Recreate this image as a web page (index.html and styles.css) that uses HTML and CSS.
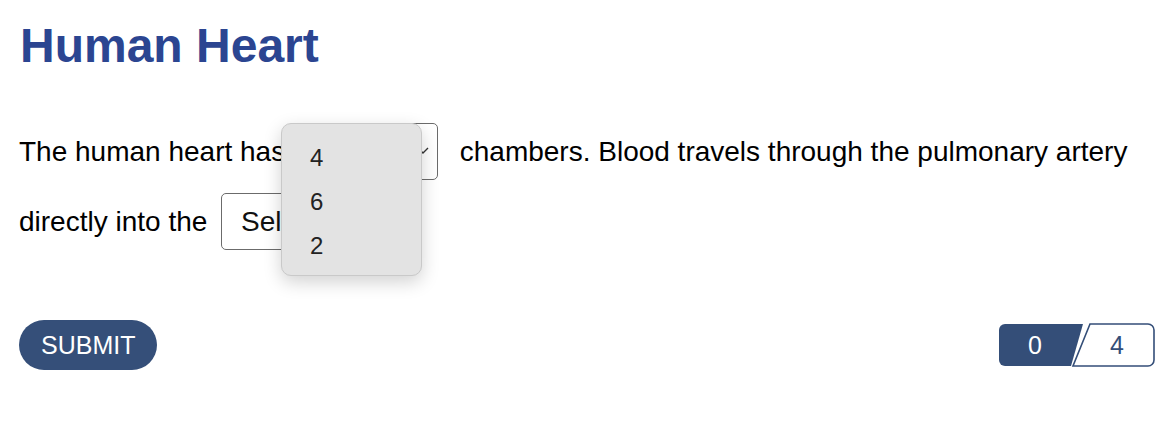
FILE: index.html
```html
<!DOCTYPE html>
<html lang="en">
<head>
  <meta charset="UTF-8">
  <meta name="viewport" content="width=device-width, initial-scale=1.0">
  <title>Human Heart</title>
  <link rel="stylesheet" href="styles.css">
</head>
<body>
  <main class="page">
    <h1 class="title">Human Heart</h1>

    <div class="question">
      The human heart has
      <span class="pick">
        <select class="blank" name="chambers">
          <option>Select</option>
          <option>4</option>
          <option>6</option>
          <option>2</option>
        </select>
        <svg class="chevron" width="12" height="7" viewBox="0 0 12 7"><path d="M1 1l5 5 5-5" fill="none" stroke="#333" stroke-width="1.4"/></svg>
        <span class="menu">
          <span class="menu-item">4</span>
          <span class="menu-item">6</span>
          <span class="menu-item">2</span>
        </span>
      </span>
      chambers. Blood travels through the pulmonary artery
      directly into the
      <span class="pick">
        <select class="blank" name="target">
          <option>Select</option>
          <option>lungs</option>
          <option>left atrium</option>
          <option>aorta</option>
        </select>
        <svg class="chevron" width="12" height="7" viewBox="0 0 12 7"><path d="M1 1l5 5 5-5" fill="none" stroke="#333" stroke-width="1.4"/></svg>
      </span>
      .
    </div>

    <div class="actions">
      <button class="submit">SUBMIT</button>

      <svg class="score" width="157" height="44" viewBox="0 0 157 44">
        <path d="M7 1H85L73 43H7A6 6 0 0 1 1 37V7A6 6 0 0 1 7 1Z" fill="#344e78"/>
        <path d="M92 1H150A6 6 0 0 1 156 7V37A6 6 0 0 1 150 43H75Z" fill="#fff" stroke="#344e78" stroke-width="1.6"/>
        <text x="37" y="31" fill="#fff" text-anchor="middle" class="score-num">0</text>
        <text x="119" y="31" fill="#344e78" text-anchor="middle" class="score-num">4</text>
      </svg>
    </div>
  </main>
</body>
</html>
```

FILE: styles.css
```css
body {
  margin: 0;
  background: #fff;
  font-family: "Liberation Sans", Arial, sans-serif;
  color: #000;
}

.page {
  padding: 18px 13px 0 19px;
}

.title {
  margin: 0;
  font-size: 48px;
  line-height: 56px;
  font-weight: bold;
  color: #2b4591;
  padding-left: 1px;
}

.question {
  margin: 43px 0 0;
  font-size: 28px;
  line-height: 70px;
}

.pick {
  position: relative;
  display: inline-block;
  margin: 0 14px 0 6px;
}

.blank {
  appearance: none;
  -webkit-appearance: none;
  width: 139px;
  height: 57px;
  padding: 0 40px 0 19px;
  border: 1px solid #6b6b6b;
  border-radius: 5px;
  background: #fff;
  font-family: "Liberation Sans", Arial, sans-serif;
  font-size: 28px;
  color: #111;
}

.chevron {
  position: absolute;
  right: 9px;
  top: 30px;
}

.menu {
  position: absolute;
  left: -18px;
  top: 6px;
  width: 141px;
  height: 153px;
  padding: 12px 0 9px;
  background: #e3e3e3;
  border: 1px solid #c9c9c9;
  border-radius: 10px;
  box-shadow: 0 6px 18px rgba(0, 0, 0, 0.18);
  box-sizing: border-box;
  z-index: 2;
}

.menu-item {
  display: block;
  padding-left: 28px;
  font-size: 24px;
  line-height: 44px;
  color: #222;
}

.actions {
  display: flex;
  justify-content: space-between;
  align-items: center;
  margin-top: 63px;
}

.submit {
  height: 50px;
  padding: 0 22px;
  border: none;
  border-radius: 25px;
  background: #354f79;
  color: #fff;
  font-family: "Liberation Sans", Arial, sans-serif;
  font-size: 25px;
}

.score-num {
  font-family: "Liberation Sans", Arial, sans-serif;
  font-size: 25px;
}
```
